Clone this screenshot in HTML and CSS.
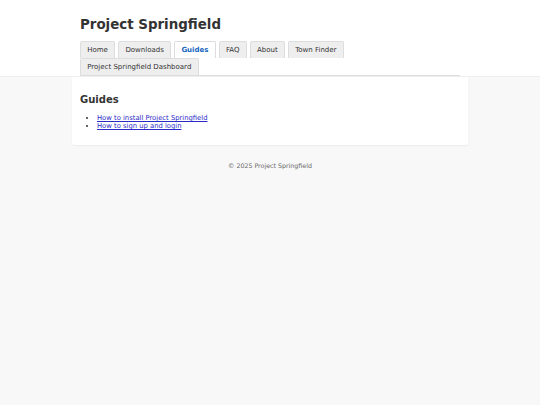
FILE: index.html
```html
<!DOCTYPE html>
<html lang="en">

<head>
    <meta charset="UTF-8">
    <meta name="viewport" content="width=device-width, initial-scale=1.0">
    <title>Guides - Project Springfield</title>
    <link rel="stylesheet" href="styles.css">
</head>

<body>

    <header class="site-header">
        <div class="header-inner">
            <h1 class="site-title">Project Springfield</h1>
            <nav>
                <ul class="tabs">
                    <li><a href="#">Home</a></li>
                    <li><a href="#">Downloads</a></li>
                    <li class="active"><a href="#">Guides</a></li>
                    <li><a href="#">FAQ</a></li>
                    <li><a href="#">About</a></li>
                    <li><a href="#">Town Finder</a></li>
                    <li><a href="#">Project Springfield Dashboard</a></li>
                </ul>
            </nav>
        </div>
    </header>

    <main class="content">
        <h2>Guides</h2>
        <ul class="guide-list">
            <li><a href="#">How to install Project Springfield</a></li>
            <li><a href="#">How to sign up and login</a></li>
        </ul>
    </main>

    <footer class="site-footer">
        <p>&copy; 2025 Project Springfield</p>
    </footer>

</body>

</html>
```

FILE: styles.css
```css
body {
    font-family: "DejaVu Sans", Verdana, sans-serif;
    font-size: 6.8px;
    background-color: #f8f8f8;
    color: #333;
    margin: 0;
}

.site-header {
    background-color: white;
    border-bottom: 1px solid #eee;
}

.header-inner {
    width: 380px;
    margin: 0 auto;
    padding-top: 16px;
}

.site-title {
    font-size: 13.4px;
    line-height: 18px;
    margin: 0 0 7px;
    color: #333;
}

/* Pestañas del menú */
.tabs {
    list-style: none;
    margin: 0;
    padding: 0;
    display: flex;
    flex-wrap: wrap;
    column-gap: 3px;
    border-bottom: 1px solid #ddd;
}

.tabs li {
    background-color: #eee;
    border: 1px solid #ddd;
    border-bottom: none;
    border-radius: 2px 2px 0 0;
}

.tabs a {
    display: block;
    padding: 0 6.25px;
    line-height: 16px;
    font-size: 7px;
    color: #333;
    text-decoration: none;
}

.tabs li.active {
    background-color: white;
}

.tabs li.active a {
    color: #1565c0;
    font-weight: bold;
}

.content {
    width: 380px;
    margin: 0 auto;
    padding: 10px 8px 15px;
    background-color: white;
    border-radius: 0 0 3px 3px;
    box-shadow: 0 1px 2px rgba(0, 0, 0, 0.05);
}

.content h2 {
    font-size: 10px;
    line-height: 12px;
    margin: 7px 0 8px;
}

.guide-list {
    margin: 0;
    padding-left: 17px;
    line-height: 8px;
}

.guide-list a {
    color: #2a2ac8;
}

.site-footer {
    text-align: center;
    color: #666;
    font-size: 6.3px;
}

.site-footer p {
    margin: 17px 0;
}
```
